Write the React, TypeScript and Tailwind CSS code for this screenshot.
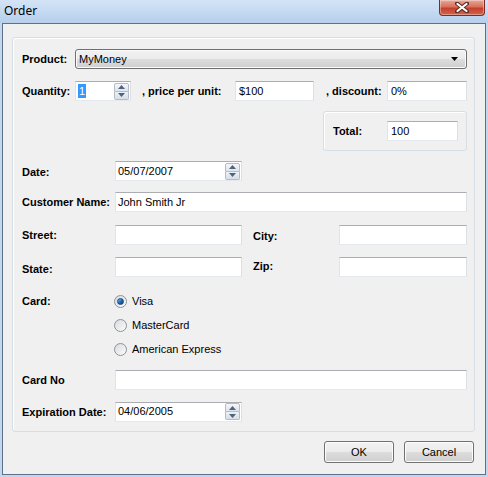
import React from "react";

const font = { fontFamily: '"Liberation Sans", Arial, sans-serif' };

const field =
  "h-[20px] bg-white border border-[#e3e9ef] border-t-[#abadb3] border-l-[#e2e3ea] border-r-[#dbdfe6] flex items-center text-[11px] text-black";

function Spinner() {
  return (
    <div className="flex flex-col w-[15px] h-[17px] mr-[1px]">
      <div className="flex-1 border border-[#b5bcc6] rounded-t-[2px] bg-gradient-to-b from-[#f4f6f9] to-[#dfe5ec] flex items-center justify-center">
        <svg width="7" height="4" viewBox="0 0 7 4">
          <path d="M0 4 L3.5 0 L7 4 Z" fill="#4d6382" />
        </svg>
      </div>
      <div className="flex-1 border border-t-0 border-[#b5bcc6] rounded-b-[2px] bg-gradient-to-b from-[#eef1f5] to-[#d7dee6] flex items-center justify-center">
        <svg width="7" height="4" viewBox="0 0 7 4">
          <path d="M0 0 L3.5 4 L7 0 Z" fill="#4d6382" />
        </svg>
      </div>
    </div>
  );
}

function Label({ w, children, className = "" }: { w: string; children: React.ReactNode; className?: string }) {
  return <span className={`${w} shrink-0 text-[11px] font-bold text-black ${className}`}>{children}</span>;
}

function Radio({ checked, label }: { checked?: boolean; label: string }) {
  return (
    <div className="flex items-center gap-[5px]">
      <span className="w-[13px] h-[13px] rounded-full border border-[#8f9296] bg-gradient-to-br from-[#d9dbde] to-[#fbfbfb] flex items-center justify-center">
        {checked && (
          <span className="w-[7px] h-[7px] rounded-full bg-gradient-to-br from-[#7dc1ef] via-[#1d6fb5] to-[#0c3f7a] border border-[#17467b]" />
        )}
      </span>
      <span className="text-[11px] text-black">{label}</span>
    </div>
  );
}

function WinButton({ children }: { children: React.ReactNode }) {
  return (
    <button className="w-[70px] h-[22px] rounded-[3px] border border-[#707070] bg-[linear-gradient(to_bottom,#f2f2f2_0%,#ebebeb_50%,#dddddd_51%,#cfcfcf_100%)] shadow-[inset_0_0_0_1px_#fcfcfc] text-[11px] text-black flex items-center justify-center">
      {children}
    </button>
  );
}

export default function App() {
  return (
    <div className="w-[488px] h-[477px] bg-[#c3d8ef] flex flex-col overflow-hidden" style={font}>
      {/* title bar */}
      <div className="h-[23px] flex items-start justify-between bg-gradient-to-b from-[#d4e4f6] to-[#b6cfec]">
        <span className="pl-[4px] pt-[2px] text-[12px] text-black" style={{ fontFamily: '"Noto Sans", "Open Sans", sans-serif' }}>
          Order
        </span>
        <div className="w-[46px] h-[16px] mr-[3px] rounded-b-[4px] border border-t-0 border-[#7b2d22] bg-[linear-gradient(to_bottom,#e9a99a_0%,#d8705d_45%,#c4412c_55%,#d2654b_100%)] shadow-[inset_0_0_0_1px_rgba(255,255,255,0.35)] flex items-center justify-center">
          <svg width="14" height="11" viewBox="0 0 14 11">
            <path d="M2 1.5 L12 9.5 M12 1.5 L2 9.5" stroke="#5a2a22" strokeWidth="4" strokeLinecap="round" />
            <path d="M2.5 2 L11.5 9 M11.5 2 L2.5 9" stroke="#ffffff" strokeWidth="2.2" strokeLinecap="round" />
          </svg>
        </div>
      </div>

      {/* client area */}
      <div className="mx-[2px] h-[452px] border border-[#5d7188] bg-[#f0f0f0] flex flex-col">
        <div className="ml-[9px] mt-[13px] w-[463px] h-[395px] border border-[#d5dfe5] rounded-[3px] shadow-[inset_1px_1px_0_#ffffff] flex flex-col pl-[9px]">
          {/* product */}
          <div className="mt-[11px] flex items-center">
            <Label w="w-[53px]">Product:</Label>
            <div className="w-[392px] h-[20px] rounded-[3px] border border-[#707070] bg-[linear-gradient(to_bottom,#f2f2f2_0%,#ebebeb_50%,#dddddd_51%,#cfcfcf_100%)] shadow-[inset_0_0_0_1px_#fafafa] flex items-center justify-between pl-[3px] pr-[8px] text-[11px]">
              <span>MyMoney</span>
              <svg width="7" height="4" viewBox="0 0 7 4">
                <path d="M0 0 L7 0 L3.5 4 Z" fill="#000" />
              </svg>
            </div>
          </div>

          {/* quantity */}
          <div className="mt-[12px] flex items-center">
            <Label w="w-[53px]">Quantity:</Label>
            <div className={`${field} w-[56px] justify-between pl-[2px]`}>
              <span className="bg-[#3399ff] text-white px-[1px] leading-[14px]">1</span>
              <Spinner />
            </div>
            <Label w="w-[93px]" className="ml-[11px]">, price per unit:</Label>
            <div className={`${field} w-[79px] pl-[3px]`}>$100</div>
            <Label w="w-[61px]" className="ml-[12px]">, discount:</Label>
            <div className={`${field} w-[80px] pl-[3px]`}>0%</div>
          </div>

          {/* total */}
          <div className="mt-[10px] ml-[301px] w-[144px] h-[40px] border border-[#d5dfe5] rounded-[3px] shadow-[inset_1px_1px_0_#ffffff] flex items-center pl-[9px]">
            <Label w="w-[54px]">Total:</Label>
            <div className={`${field} w-[71px] pl-[3px]`}>100</div>
          </div>

          {/* date */}
          <div className="mt-[10px] flex items-center">
            <Label w="w-[93px]" className="mt-[2px]">Date:</Label>
            <div className={`${field} w-[127px] justify-between pl-[2px]`}>
              <span>05/07/2007</span>
              <Spinner />
            </div>
          </div>

          {/* customer */}
          <div className="mt-[11px] flex items-center">
            <Label w="w-[93px]">Customer Name:</Label>
            <div className={`${field} w-[352px] pl-[2px]`}>John Smith Jr</div>
          </div>

          {/* street / city */}
          <div className="mt-[13px] flex items-center">
            <Label w="w-[93px]">Street:</Label>
            <div className={`${field} w-[127px]`} />
            <Label w="w-[86px]" className="ml-[11px] mt-[3px]">City:</Label>
            <div className={`${field} w-[128px]`} />
          </div>

          {/* state / zip */}
          <div className="mt-[12px] flex items-center">
            <Label w="w-[93px]" className="mt-[4px]">State:</Label>
            <div className={`${field} w-[127px]`} />
            <Label w="w-[86px]" className="ml-[11px] -mt-[2px]">Zip:</Label>
            <div className={`${field} w-[128px]`} />
          </div>

          {/* card */}
          <div className="mt-[12px] flex flex-col">
            <div className="h-[24px] flex items-center">
              <Label w="w-[92px]">Card:</Label>
              <Radio checked label="Visa" />
            </div>
            <div className="h-[24px] flex items-center pl-[92px]">
              <Radio label="MasterCard" />
            </div>
            <div className="h-[24px] flex items-center pl-[92px]">
              <Radio label="American Express" />
            </div>
          </div>

          {/* card no */}
          <div className="mt-[8px] flex items-center">
            <Label w="w-[93px]" className="mt-[2px]">Card No</Label>
            <div className={`${field} w-[352px]`} />
          </div>

          {/* expiration */}
          <div className="mt-[12px] flex items-center">
            <Label w="w-[93px]" className="mt-[2px]">Expiration Date:</Label>
            <div className={`${field} w-[127px] justify-between pl-[2px]`}>
              <span>04/06/2005</span>
              <Spinner />
            </div>
          </div>
        </div>

        {/* buttons */}
        <div className="mt-[9px] flex justify-end gap-[10px] pr-[11px]">
          <WinButton>OK</WinButton>
          <WinButton>Cancel</WinButton>
        </div>
      </div>
    </div>
  );
}
